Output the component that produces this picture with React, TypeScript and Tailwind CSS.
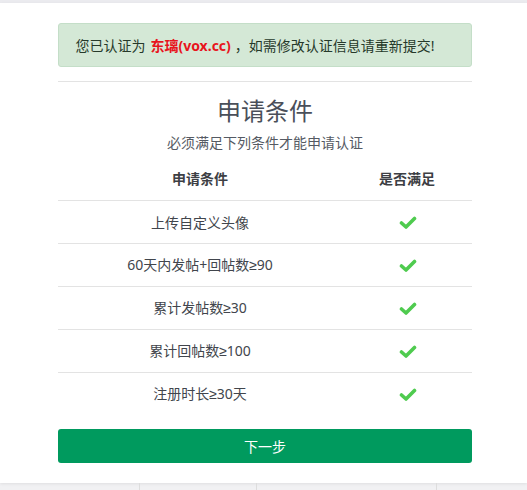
import React from 'react'

const rows = [
  ['上传自定义头像'],
  ['60天内发帖+回帖数', '90'],
  ['累计发帖数', '30'],
  ['累计回帖数', '100'],
  ['注册时长', '30天'],
]

function Check() {
  return (
    <svg width="18" height="13" viewBox="0 0 18 13" className="inline-block">
      <polyline
        points="2.5,7 7,11 15.5,2.5"
        fill="none"
        stroke="#4fcb4f"
        strokeWidth="3.6"
        strokeLinecap="round"
        strokeLinejoin="round"
      />
    </svg>
  )
}

export default function App() {
  return (
    <div
      className="w-[527px] h-[490px] overflow-hidden bg-[#f1f1f3] flex flex-col"
      style={{ fontFamily: '"Noto Sans", "Noto Sans CJK SC", sans-serif' }}
    >
      <div className="h-[3px] shrink-0 bg-[#ebebef]" />
      <div className="h-[480px] shrink-0 bg-white shadow-[0_1px_3px_rgba(0,0,0,0.08)]">
        <div className="ml-[58px] w-[414px] pt-[20px]">
          {/* notice */}
          <div className="h-[44px] pr-[20px] rounded-[3px] border border-[#c4dec8] bg-[#d4e8d6] flex items-center justify-center text-[14px] text-[#26392a]">
            <span>您已认证为</span>
            <span className="ml-[5px] font-bold text-[#e8141c]">东璃(vox.cc)</span>
            <span className="ml-[4px]">，</span>
            <span>如需修改认证信息请重新提交!</span>
          </div>

          <div className="mt-[14px] h-px bg-[#e3e3e3]" />

          <div className="mt-[14px] text-center text-[24px] leading-[30px] text-[#4a4f5a]">申请条件</div>
          <div className="mt-[7px] text-center text-[14px] leading-[20px] text-[#555a63]">
            必须满足下列条件才能申请认证
          </div>

          {/* table */}
          <div className="mt-[15px] flex h-[32px] text-[14px] font-bold text-[#3d3f44] items-start">
            <div className="w-[284px] text-center">申请条件</div>
            <div className="flex-1 text-center">是否满足</div>
          </div>
          {rows.map(([a, b]) => (
            <div key={a} className="flex h-[43px] items-center border-t border-[#e3e3e3] text-[14px] text-[#41454c]">
              <div className="w-[284px] text-center">
                {a}
                {b && (
                  <>
                    <span style={{ fontFamily: '"Liberation Sans", sans-serif' }}>≥</span>
                    {b}
                  </>
                )}
              </div>
              <div className="flex-1 flex justify-center pl-[2px]">
                <Check />
              </div>
            </div>
          ))}

          <button className="mt-[14px] w-full h-[34px] rounded-[3px] bg-[#009a5e] text-white text-[14px]">
            下一步
          </button>
        </div>
      </div>
      <div className="flex-1 flex">
        <div className="w-[140px] border-r border-[#dddddd]" />
        <div className="w-[117px] border-r border-[#dddddd]" />
        <div className="w-[180px] border-r border-[#dddddd]" />
      </div>
    </div>
  )
}
